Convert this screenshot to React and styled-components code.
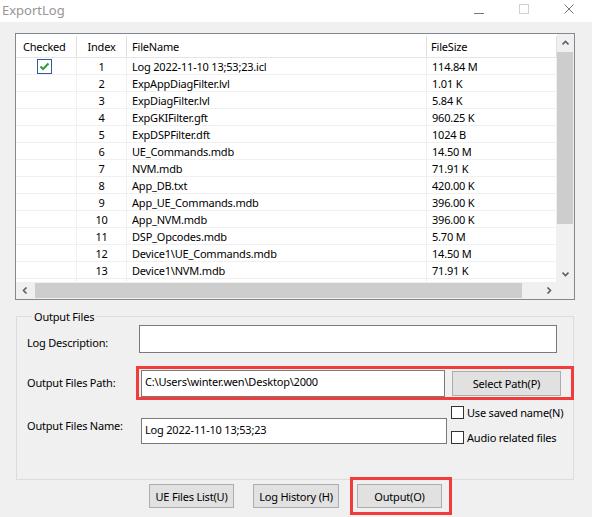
import React from "react";
import styled, { createGlobalStyle } from "styled-components";

const GlobalStyle = createGlobalStyle`
  html, body {
    margin: 0;
    padding: 0;
    background: #f0f0f0;
  }
  * {
    box-sizing: border-box;
  }
`;

const FONT = `"Noto Sans", "Liberation Sans", Arial, sans-serif`;

const rows = [
  { idx: 1, name: "Log 2022-11-10 13;53;23.icl", size: "114.84 M", checked: true },
  { idx: 2, name: "ExpAppDiagFilter.lvl", size: "1.01 K" },
  { idx: 3, name: "ExpDiagFilter.lvl", size: "5.84 K" },
  { idx: 4, name: "ExpGKIFilter.gft", size: "960.25 K" },
  { idx: 5, name: "ExpDSPFilter.dft", size: "1024 B" },
  { idx: 6, name: "UE_Commands.mdb", size: "14.50 M" },
  { idx: 7, name: "NVM.mdb", size: "71.91 K" },
  { idx: 8, name: "App_DB.txt", size: "420.00 K" },
  { idx: 9, name: "App_UE_Commands.mdb", size: "396.00 K" },
  { idx: 10, name: "App_NVM.mdb", size: "396.00 K" },
  { idx: 11, name: "DSP_Opcodes.mdb", size: "5.70 M" },
  { idx: 12, name: "Device1\\UE_Commands.mdb", size: "14.50 M" },
  { idx: 13, name: "Device1\\NVM.mdb", size: "71.91 K" },
  { idx: 14, name: "", size: "" },
];

const COLS = "61px 50px 300px 130px";

const Window = styled.div`
  width: 592px;
  height: 517px;
  background: #f0f0f0;
  font-family: ${FONT};
  font-size: 11px;
  letter-spacing: -0.2px;
  color: #000;
  overflow: hidden;
`;

const TitleBar = styled.div`
  height: 22px;
  background: #fff;
  display: flex;
  align-items: center;
  padding-left: 2px;
`;

const Title = styled.span`
  font-size: 13px;
  letter-spacing: 0;
  color: #9a9393;
  line-height: 1;
  margin-top: -2px;
`;

const Controls = styled.div`
  margin-left: auto;
  display: flex;
  gap: 35px;
  padding-right: 18px;
  align-items: center;
  margin-top: -4px;
`;

const Body = styled.div`
  padding: 11px 0 0 15px;
`;

const ListView = styled.div`
  width: 560px;
  height: 267px;
  border: 1px solid #828790;
  background: #fff;
  display: grid;
  grid-template-columns: 541px 17px;
  grid-template-rows: 248px 17px;
`;

const TableArea = styled.div`
  overflow: hidden;
`;

const HeaderRow = styled.div`
  display: grid;
  grid-template-columns: ${COLS};
  height: 24px;
  border-bottom: 1px solid #e5e5e5;
`;

const HeaderCell = styled.div`
  display: flex;
  align-items: center;
  justify-content: ${(p) => p.$align || "flex-start"};
  padding-left: ${(p) => p.$pl || "5px"};
  border-right: 1px solid #e0e0e0;
  margin-top: 2px;
`;

const Row = styled.div`
  display: grid;
  grid-template-columns: ${COLS};
  height: 17px;
  border-bottom: 1px solid #f0f0f0;
`;

const Cell = styled.div`
  display: flex;
  align-items: center;
  justify-content: ${(p) => p.$align || "flex-start"};
  padding-left: ${(p) => (p.$align === "center" ? "0" : "5px")};
  border-right: 1px solid #f0f0f0;
  white-space: nowrap;
  overflow: hidden;
`;

const ListCheck = styled.span`
  width: 15px;
  height: 15px;
  border: 1px solid #2c5d9a;
  background: #fff;
  display: flex;
  align-items: center;
  justify-content: center;
  margin-left: -3px;
`;

const VScroll = styled.div`
  background: #f0f0f0;
  display: flex;
  flex-direction: column;
`;

const HScroll = styled.div`
  background: #f0f0f0;
  display: flex;
`;

const Corner = styled.div`
  background: #f0f0f0;
`;

const ArrowBox = styled.div`
  width: 17px;
  height: 17px;
  flex: none;
  display: flex;
  align-items: center;
  justify-content: center;
`;

const Track = styled.div`
  flex: 1;
  display: flex;
  flex-direction: ${(p) => (p.$vertical ? "column" : "row")};
`;

const VThumb = styled.div`
  margin: 1px 1px 0 0;
  height: 172px;
  background: #cdcdcd;
`;

const HThumb = styled.div`
  margin: 1px 0 1px 2px;
  width: 487px;
  background: #cdcdcd;
`;

const GroupBox = styled.fieldset`
  margin: 9px 0 0 1px;
  width: 558px;
  border: 1px solid #dcdcdc;
  padding: 1px 0 35px 10px;
  min-width: 0;
`;

const Legend = styled.legend`
  margin-left: 5px;
  padding: 0 2px;
  line-height: 15px;
  font-size: 11px;
`;

const FormRow = styled.div`
  display: flex;
  align-items: flex-start;
  margin-top: ${(p) => p.$mt || 0}px;
`;

const Label = styled.div`
  width: 109px;
  flex: none;
  line-height: 15px;
  margin-top: ${(p) => p.$mt || 0}px;
  white-space: nowrap;
`;

const TextBox = styled.div`
  width: ${(p) => p.$w}px;
  height: ${(p) => p.$h}px;
  margin-left: ${(p) => p.$ml || 0}px;
  margin-top: ${(p) => p.$mt || 0}px;
  border: 1px solid #7a7a7a;
  background: #fff;
  padding: 3px 3px 0;
  line-height: 15px;
  white-space: nowrap;
  overflow: hidden;
  flex: none;
`;

const Highlight = styled.div`
  border: 3px solid #f23c3c;
  display: flex;
  align-items: center;
  gap: ${(p) => p.$gap || 0}px;
  padding: ${(p) => p.$pad};
  margin-left: ${(p) => p.$ml || 0}px;
  flex: none;
`;

const Button = styled.div`
  width: ${(p) => p.$w}px;
  height: ${(p) => p.$h || 24}px;
  margin-left: ${(p) => p.$ml || 0}px;
  background: #e1e1e1;
  border: 1px solid #adadad;
  display: flex;
  align-items: center;
  justify-content: center;
  white-space: nowrap;
  flex: none;
`;

const CheckColumn = styled.div`
  margin-left: 4px;
  display: flex;
  flex-direction: column;
  gap: 12px;
`;

const CheckRow = styled.div`
  display: flex;
  align-items: center;
  gap: 3px;
  height: 13px;
  white-space: nowrap;
`;

const Box = styled.span`
  width: 13px;
  height: 13px;
  border: 1px solid #333;
  background: #fff;
  flex: none;
`;

const ButtonBar = styled.div`
  display: flex;
  align-items: center;
  margin-top: -3px;
  padding-left: 134px;
`;

const Chevron = ({ dir }) => {
  const pts = {
    up: "0.5,4.5 3.5,1.5 6.5,4.5",
    down: "0.5,1.5 3.5,4.5 6.5,1.5",
    left: "4.5,0.5 1.5,3.5 4.5,6.5",
    right: "1.5,0.5 4.5,3.5 1.5,6.5",
  }[dir];
  const vertical = dir === "up" || dir === "down";
  return (
    <svg width={vertical ? 7 : 6} height={vertical ? 6 : 7} viewBox={vertical ? "0 0 7 6" : "0 0 6 7"}>
      <polyline points={pts} fill="none" stroke="#606060" strokeWidth="1.6" />
    </svg>
  );
};

const Check = () => (
  <svg width="11" height="9" viewBox="0 0 11 9">
    <polyline points="1.5,4.5 4,7 9.5,1.5" fill="none" stroke="#2f9a3c" strokeWidth="2" />
  </svg>
);

export default function App() {
  return (
    <Window>
      <GlobalStyle />
      <TitleBar>
        <Title>ExportLog</Title>
        <Controls>
          <svg width="10" height="10" viewBox="0 0 10 10">
            <line x1="0" y1="9.5" x2="10" y2="9.5" stroke="#777" strokeWidth="1" />
          </svg>
          <svg width="10" height="10" viewBox="0 0 10 10">
            <rect x="0.5" y="0.5" width="9" height="9" fill="none" stroke="#d0d0d0" strokeWidth="1" />
          </svg>
          <svg width="10" height="10" viewBox="0 0 10 10">
            <path d="M0.5 0.5 L9.5 9.5 M9.5 0.5 L0.5 9.5" stroke="#777" strokeWidth="1" />
          </svg>
        </Controls>
      </TitleBar>

      <Body>
        <ListView>
          <TableArea>
            <HeaderRow>
              <HeaderCell $pl="7px">Checked</HeaderCell>
              <HeaderCell $align="center" $pl="0">Index</HeaderCell>
              <HeaderCell>FileName</HeaderCell>
              <HeaderCell $pl="4px">FileSize</HeaderCell>
            </HeaderRow>
            {rows.map((r) => (
              <Row key={r.idx}>
                <Cell $align="center">
                  {r.checked && (
                    <ListCheck>
                      <Check />
                    </ListCheck>
                  )}
                </Cell>
                <Cell $align="center">{r.name ? r.idx : ""}</Cell>
                <Cell>{r.name}</Cell>
                <Cell>{r.size}</Cell>
              </Row>
            ))}
          </TableArea>
          <VScroll>
            <ArrowBox>
              <Chevron dir="up" />
            </ArrowBox>
            <Track $vertical>
              <VThumb />
            </Track>
            <ArrowBox>
              <Chevron dir="down" />
            </ArrowBox>
          </VScroll>
          <HScroll>
            <ArrowBox>
              <Chevron dir="left" />
            </ArrowBox>
            <Track>
              <HThumb />
            </Track>
            <ArrowBox>
              <Chevron dir="right" />
            </ArrowBox>
          </HScroll>
          <Corner />
        </ListView>

        <GroupBox>
          <Legend>Output Files</Legend>
          <FormRow>
            <Label $mt={10}>Log Description:</Label>
            <TextBox $w={418} $h={28} $ml={3} />
          </FormRow>
          <FormRow $mt={13}>
            <Label $mt={9}>Output Files Path:</Label>
            <Highlight $gap={7} $pad="1px 10px 0 2px">
              <TextBox $w={304} $h={27}>C:\Users\winter.wen\Desktop\2000</TextBox>
              <Button $w={109} $h={25}>Select Path(P)</Button>
            </Highlight>
          </FormRow>
          <FormRow $mt={6}>
            <Label $mt={12}>Output Files Name:</Label>
            <TextBox $w={306} $h={26} $ml={5} $mt={12}>Log 2022-11-10 13;53;23</TextBox>
            <CheckColumn>
              <CheckRow>
                <Box />
                Use saved name(N)
              </CheckRow>
              <CheckRow>
                <Box />
                Audio related files
              </CheckRow>
            </CheckColumn>
          </FormRow>
        </GroupBox>

        <ButtonBar>
          <Button $w={85}>UE Files List(U)</Button>
          <Button $w={86} $ml={19}>Log History (H)</Button>
          <Highlight $pad="4px 7px 4px 4px" $ml={11}>
            <Button $w={85}>Output(O)</Button>
          </Highlight>
        </ButtonBar>
      </Body>
    </Window>
  );
}
